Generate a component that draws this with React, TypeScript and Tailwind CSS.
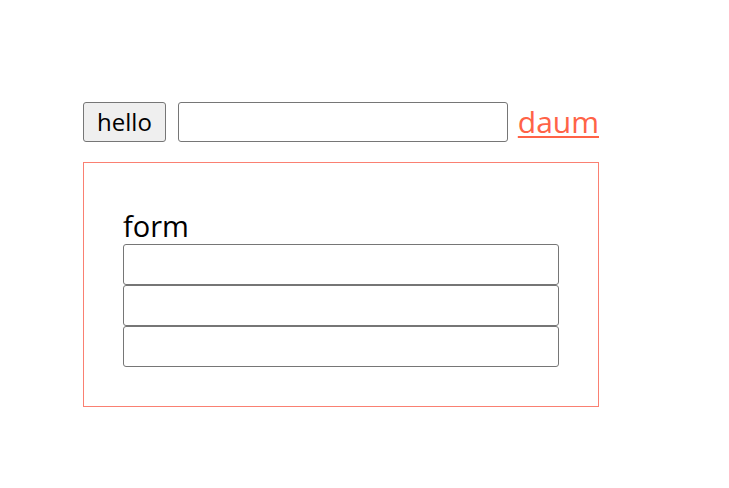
export default function App() {
  return (
    <div className="min-h-[488px] bg-white pl-[83px] pt-[102px]" style={{ fontFamily: '"Open Sans", "Noto Sans", sans-serif' }}>
      <div className="w-[516px]">
        <div className="flex h-[40px] items-center">
          <button className="h-[40px] w-[83px] rounded-[3px] border border-[#767676] bg-[#efefef] text-[24px] leading-none text-black">
            hello
          </button>
          <input className="ml-[12px] h-[40px] w-[330px] rounded-[3px] border border-[#767676] bg-white" />
          <a href="#" className="ml-[10px] text-[30px] leading-[40px] text-[#ff6347] underline decoration-2 underline-offset-[3px]">
            daum
          </a>
        </div>
        <form className="mt-[20px] w-[516px] border border-[#fa8072] px-[39px] pb-[39px] pt-[41px]">
          <div className="h-[40px] pt-[2px] text-[29px] leading-[40px] text-black">form</div>
          <input className="block h-[41px] w-[436px] rounded-[3px] border border-[#767676] bg-white" />
          <input className="block h-[41px] w-[436px] rounded-[3px] border border-[#767676] bg-white" />
          <input className="block h-[41px] w-[436px] rounded-[3px] border border-[#767676] bg-white" />
        </form>
      </div>
    </div>
  );
}
